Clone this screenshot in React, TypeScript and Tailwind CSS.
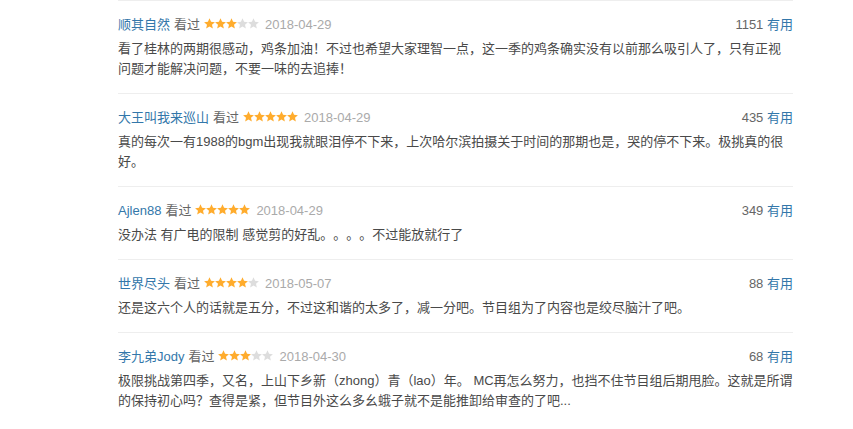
const reviews = [
  {
    name: '顺其自然',
    rating: 3,
    date: '2018-04-29',
    votes: 1151,
    text: '看了桂林的两期很感动，鸡条加油！不过也希望大家理智一点，这一季的鸡条确实没有以前那么吸引人了，只有正视问题才能解决问题，不要一味的去追捧！',
  },
  {
    name: '大王叫我来巡山',
    rating: 5,
    date: '2018-04-29',
    votes: 435,
    text: '真的每次一有1988的bgm出现我就眼泪停不下来，上次哈尔滨拍摄关于时间的那期也是，哭的停不下来。极挑真的很好。',
  },
  {
    name: 'Ajlen88',
    rating: 5,
    date: '2018-04-29',
    votes: 349,
    text: '没办法 有广电的限制 感觉剪的好乱。。。。不过能放就行了',
  },
  {
    name: '世界尽头',
    rating: 4,
    date: '2018-05-07',
    votes: 88,
    text: '还是这六个人的话就是五分，不过这和谐的太多了，减一分吧。节目组为了内容也是绞尽脑汁了吧。',
  },
  {
    name: '李九弟Jody',
    rating: 3,
    date: '2018-04-30',
    votes: 68,
    text: '极限挑战第四季，又名，上山下乡新（zhong）青（lao）年。 MC再怎么努力，也挡不住节目组后期甩脸。这就是所谓的保持初心吗？查得是紧，但节目外这么多幺蛾子就不是能推卸给审查的了吧...',
  },
]

function Stars({ rating }: { rating: number }) {
  return (
    <span className="inline-flex items-center">
      {[0, 1, 2, 3, 4].map(i => (
        <svg key={i} width="11" height="11" viewBox="1 1.5 22 21" className="block">
          <polygon
            points="12,1.5 15.1,8.6 22.8,9.3 17,14.4 18.7,22 12,18 5.3,22 7,14.4 1.2,9.3 8.9,8.6"
            fill={i < rating ? '#ffac2d' : '#dddddd'}
          />
        </svg>
      ))}
    </span>
  )
}

export default function App() {
  return (
    <div
      className="w-[853px] h-[429px] overflow-hidden bg-white text-[13px] [text-spacing-trim:space-all]"
      style={{ fontFamily: '"Liberation Sans", Arial, "Noto Sans CJK SC", sans-serif' }}
    >
      <div className="ml-[118px] w-[675px]">
        {reviews.map((r, idx) => (
          <div key={idx} className="border-t border-[#eeeeee] pt-[13px] pb-[14px]">
            <div className="flex items-center h-[22px] leading-[22px]">
              <span className="text-[#3377aa]">{r.name}</span>
              <span className="ml-[4px] text-[#666666]">看过</span>
              <span className="ml-[4px]"><Stars rating={r.rating} /></span>
              <span className="ml-[6px] text-[#aaaaaa]">{r.date}</span>
              <span className="ml-auto text-[#666666]">
                {r.votes} <span className="text-[#3377aa]">有用</span>
              </span>
            </div>
            <p className="mt-[3px] leading-[20px] text-[#494949] break-all">{r.text}</p>
          </div>
        ))}
      </div>
    </div>
  )
}
